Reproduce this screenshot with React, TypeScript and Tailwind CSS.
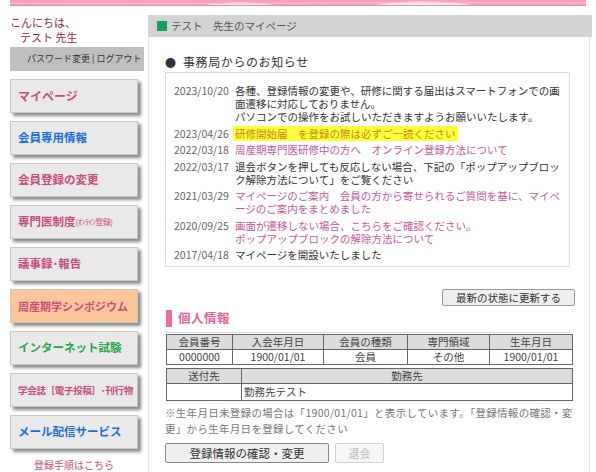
import React from "react";

const F = { fontFamily: '"Noto Sans CJK JP", "Noto Sans", sans-serif' };

function Banner() {
  return (
    <div className="mx-[10px] h-[6px] overflow-hidden">
      <svg width="578" height="6" viewBox="0 0 578 6" className="block">
        <rect width="578" height="6" fill="#f3a2b9" />
        <path d="M190 6 C 215 1, 245 1, 270 6 Z" fill="#fde7ee" />
        <path d="M360 6 C 390 0, 430 0, 470 6 Z" fill="#fff" opacity="0.85" />
        <path d="M0 3 C 100 5, 300 2, 578 3" stroke="#f8c3d2" strokeWidth="1" fill="none" />
        <rect y="5" width="578" height="1" fill="#e98aa6" />
      </svg>
    </div>
  );
}

function MenuBtn({
  children,
  bg = "bg-[#e9e9e9]",
}: {
  children: React.ReactNode;
  bg?: string;
}) {
  return (
    <div
      className={`w-[128px] h-[34px] mb-[8px] ${bg} border border-[#c8c8c8] shadow-[3px_3px_3px_#8a8a8a] flex items-center pl-[7px] font-bold whitespace-nowrap`}
    >
      {children}
    </div>
  );
}

function Sidebar() {
  return (
    <aside className="w-[148px] shrink-0 pl-[10px]">
      <div className="text-[11px] leading-[15px] text-[#94284a]">こんにちは、</div>
      <div className="text-[11px] leading-[15px] text-[#94284a] pl-[10px]">テスト 先生</div>
      <div className="mt-[2px] w-[134px] h-[24px] bg-[#bfbfbf] flex items-center pl-[17px] text-[9px] text-[#333] whitespace-nowrap">
        パスワード変更 | ログアウト
      </div>
      <div className="mt-[8px]">
        <MenuBtn>
          <span className="text-[12px] text-[#c64f7e]">マイページ</span>
        </MenuBtn>
        <MenuBtn>
          <span className="text-[11.5px] text-[#1c6fd6]">会員専用情報</span>
        </MenuBtn>
        <MenuBtn>
          <span className="text-[11.5px] text-[#c64f7e]">会員登録の変更</span>
        </MenuBtn>
        <MenuBtn>
          <span className="text-[11.5px] text-[#c64f7e]">専門医制度</span>
          <span className="text-[8px] text-[#c64f7e] font-normal tracking-[-0.5px]">(ｵﾝﾗｲﾝ登録)</span>
        </MenuBtn>
        <MenuBtn>
          <span className="text-[11.5px] text-[#c64f7e]">議事録･報告</span>
        </MenuBtn>
        <MenuBtn bg="bg-[#fdc699]">
          <span className="text-[11px] text-[#c64f7e]">周産期学シンポジウム</span>
        </MenuBtn>
        <MenuBtn>
          <span className="text-[11.5px] text-[#2aa548]">インターネット試験</span>
        </MenuBtn>
        <MenuBtn>
          <span className="text-[9.5px] text-[#c64f7e] tracking-[-0.3px]">学会誌［電子投稿］･刊行物</span>
        </MenuBtn>
        <MenuBtn>
          <span className="text-[11.5px] text-[#1c6fd6]">メール配信サービス</span>
        </MenuBtn>
      </div>
      <div className="w-[128px] text-center text-[10px] text-[#c64f7e]">登録手順はこちら</div>
    </aside>
  );
}

type Notice = { date: string; lines: string[]; color: string; hl?: boolean };

const notices: Notice[] = [
  {
    date: "2023/10/20",
    lines: [
      "各種、登録情報の変更や、研修に関する届出はスマートフォンでの画",
      "面遷移に対応しておりません。",
      "パソコンでの操作をお試しいただきますようお願いいたします。",
    ],
    color: "text-[#333]",
  },
  { date: "2023/04/26", lines: ["研修開始届　を登録の際は必ずご一読ください"], color: "text-[#c8880e]", hl: true },
  { date: "2022/03/18", lines: ["周産期専門医研修中の方へ　オンライン登録方法について"], color: "text-[#c45a9c]" },
  {
    date: "2022/03/17",
    lines: ["退会ボタンを押しても反応しない場合、下記の「ポップアップブロッ", "ク解除方法について」をご覧ください"],
    color: "text-[#333]",
  },
  {
    date: "2021/03/29",
    lines: ["マイページのご案内　会員の方から寄せられるご質問を基に、マイペ", "ージのご案内をまとめました"],
    color: "text-[#c45a9c]",
  },
  {
    date: "2020/09/25",
    lines: ["画面が遷移しない場合、こちらをご確認ください。", "ポップアップブロックの解除方法について"],
    color: "text-[#c45a9c]",
  },
  { date: "2017/04/18", lines: ["マイページを開設いたしました"], color: "text-[#333]" },
];

function Notices() {
  return (
    <div className="w-[405px] h-[195px] border border-[#dcdcdc] pt-[11px] pl-[8px] flex flex-col gap-[3.5px]">
      {notices.map((n) => (
        <div key={n.date} className="flex text-[10.5px] leading-[13px] whitespace-nowrap">
          <div className="w-[61px] shrink-0 text-[#666]">{n.date}</div>
          <div className={n.color}>
            {n.lines.map((l, i) => (
              <div key={i}>
                {n.hl ? <span className="bg-[#ffff3a] px-[2px] -ml-[2px]">{l}</span> : l}
              </div>
            ))}
          </div>
        </div>
      ))}
    </div>
  );
}

const th = "border border-[#666] bg-[#dcdcdc] font-normal text-[#444] h-[15px] leading-[13px] text-center p-0";
const td = "border border-[#666] text-[#444] h-[15px] leading-[13px] text-center p-0";

function Main() {
  return (
    <main className="w-[444px] shrink-0">
      <div className="h-[22px] bg-[#d3d3d3] flex items-center pl-[9px] gap-[4px]">
        <div className="w-[10px] h-[10px] bg-[#17a05e]" />
        <span className="text-[10.5px] text-[#555]">テスト　先生のマイページ</span>
      </div>
      <div className="w-[442px] h-[450px] border-l border-r border-[#e6e6e6] px-[16px] flex flex-col">
        <div className="mt-[18px] h-[14px] flex items-center text-[12px] text-[#333] tracking-[0.6px]">
          <span className="text-[11px] w-[18px] text-[#333]">●</span>
          <span>事務局からのお知らせ</span>
        </div>
        <div className="mt-[3px]">
          <Notices />
        </div>
        <div className="mt-[22px] flex justify-end">
          <button className="w-[133px] h-[17px] bg-[#efefef] border border-[#999] rounded-[2px] text-[10.5px] leading-[15px] text-[#333] text-center mr-[-2px]">
            最新の状態に更新する
          </button>
        </div>
        <div className="mt-[3px] w-[405px] pb-[4px] border-b border-[#dcdcdc] flex items-center gap-[6px]">
          <div className="w-[6px] h-[17px] bg-[#ef6c9c] ml-[1px]" />
          <span className="text-[12.5px] font-bold text-[#e4649a] tracking-[0.5px]">個人情報</span>
        </div>
        <table className="mt-[1px] ml-[1px] w-[406px] border-collapse text-[10.5px] table-fixed">
          <colgroup>
            <col className="w-[66px]" />
            <col className="w-[91px]" />
            <col className="w-[84px]" />
            <col className="w-[82px]" />
            <col className="w-[83px]" />
          </colgroup>
          <tbody>
            <tr>
              <th className={th}>会員番号</th>
              <th className={th}>入会年月日</th>
              <th className={th}>会員の種類</th>
              <th className={th}>専門領域</th>
              <th className={th}>生年月日</th>
            </tr>
            <tr>
              <td className={td}>0000000</td>
              <td className={td}>1900/01/01</td>
              <td className={td}>会員</td>
              <td className={td}>その他</td>
              <td className={td}>1900/01/01</td>
            </tr>
          </tbody>
        </table>
        <table className="mt-[3px] ml-[1px] w-[406px] border-collapse text-[10.5px] table-fixed">
          <colgroup>
            <col className="w-[75px]" />
            <col className="w-[331px]" />
          </colgroup>
          <tbody>
            <tr>
              <th className={th}>送付先</th>
              <th className={th}>勤務先</th>
            </tr>
            <tr>
              <td className={`${td} h-[17px]`}></td>
              <td className={`${td} h-[17px] text-left pl-[2px]`}>勤務先テスト</td>
            </tr>
          </tbody>
        </table>
        <div className="mt-[4px] text-[10.5px] leading-[16px] text-[#777] whitespace-nowrap tracking-[0.3px]">
          <div>※生年月日未登録の場合は「1900/01/01」と表示しています。「登録情報の確認・変</div>
          <div>更」から生年月日を登録してください</div>
        </div>
        <div className="mt-[6px] flex gap-[6px]">
          <button className="w-[164px] h-[20px] bg-[#efefef] border border-[#888] rounded-[2px] text-[11.5px] leading-[18px] text-[#333]">
            登録情報の確認・変更
          </button>
          <button className="w-[49px] h-[20px] bg-[#f6f6f6] border border-[#d0d0d0] rounded-[2px] text-[11px] leading-[18px] text-[#bbb]">
            退会
          </button>
        </div>
      </div>
    </main>
  );
}

export default function App() {
  return (
    <div className="w-[596px] h-[472px] overflow-hidden bg-white" style={F}>
      <Banner />
      <div className="flex mt-[9px]">
        <Sidebar />
        <Main />
      </div>
    </div>
  );
}
